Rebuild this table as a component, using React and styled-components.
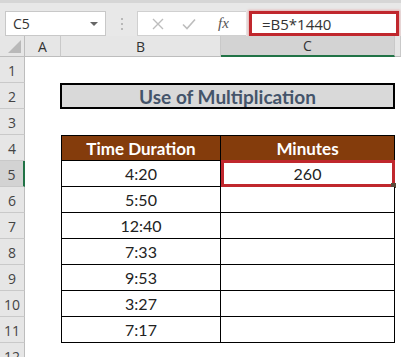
import React from "react";
import styled, { createGlobalStyle } from "styled-components";

const Global = createGlobalStyle`
  html, body { margin: 0; padding: 0; background: #ffffff; }
  body { width: 401px; height: 357px; overflow: hidden; }
`;

const Page = styled.div`
  width: 401px;
  height: 357px;
  display: flex;
  flex-direction: column;
  background: #fff;
  overflow: hidden;
`;

const Toolbar = styled.div`
  height: 43px;
  border-top: 3px solid #d6d6d6;
  background: #e8e8e8;
  display: flex;
  align-items: flex-start;
  padding: 8px 0 0 5px;
  box-sizing: border-box;
  height: 46px;
`;

const NameBox = styled.div`
  width: 101px;
  height: 25px;
  box-sizing: border-box;
  background: #fff;
  border: 1px solid #c8c8c8;
  display: flex;
  align-items: center;
  justify-content: space-between;
  padding: 0 7px 0 7px;
  font: 14px "Open Sans", sans-serif;
  color: #333;
`;

const Caret = styled.span`
  width: 0;
  height: 0;
  border-left: 4px solid transparent;
  border-right: 4px solid transparent;
  border-top: 4px solid #666;
`;

const Dots = styled.div`
  width: 31px;
  display: flex;
  flex-direction: column;
  align-items: center;
  gap: 3px;
  padding-top: 7px;
  & > span { width: 2px; height: 2px; background: #b8b8b8; }
`;

const FnBox = styled.div`
  width: 109px;
  height: 25px;
  box-sizing: border-box;
  background: #fff;
  border: 1px solid #d0d0d0;
  border-right: none;
  display: flex;
  align-items: center;
  padding-left: 14px;
  gap: 18px;
`;

const Fx = styled.span`
  font: italic 15px "Liberation Serif", serif;
  color: #555;
  margin-left: 4px;
`;

const FormulaBox = styled.div`
  margin-left: 3px;
  width: 150px;
  height: 25px;
  box-sizing: border-box;
  background: #fff;
  border: 3px solid #c0272d;
  box-shadow: 0 0 2px 1px rgba(230, 120, 120, 0.5);
  display: flex;
  align-items: center;
  padding-left: 10px;
  font: 15px "Open Sans", sans-serif;
  color: #333;
`;

const Sheet = styled.div`
  display: grid;
  grid-template-columns: 25px 36px 160px 174px 1fr;
  grid-template-rows: 21px repeat(12, 26px);
`;

const HeadCell = styled.div`
  background: ${(p) => (p.$active ? "#d3d3d3" : "#e6e6e6")};
  border-right: 1px solid #c9c9c9;
  border-bottom: ${(p) => (p.$active ? "2px solid #217346" : "1px solid #bdbdbd")};
  box-sizing: border-box;
  display: flex;
  align-items: center;
  justify-content: center;
  font: 14px "Open Sans", sans-serif;
  color: #333;
`;

const Corner = styled.div`
  background: #e6e6e6;
  border-right: 1px solid #bdbdbd;
  border-bottom: 1px solid #bdbdbd;
  box-sizing: border-box;
  position: relative;
  &::after {
    content: "";
    position: absolute;
    right: 3px;
    bottom: 3px;
    border-left: 13px solid transparent;
    border-bottom: 13px solid #b9b9b9;
  }
`;

const RowHead = styled.div`
  background: ${(p) => (p.$active ? "#d3d3d3" : "#e6e6e6")};
  border-bottom: 1px solid #c9c9c9;
  border-right: ${(p) => (p.$active ? "2px solid #217346" : "1px solid #bdbdbd")};
  box-sizing: border-box;
  display: flex;
  align-items: center;
  justify-content: center;
  padding-top: 2px;
  font: 14px "Open Sans", sans-serif;
  color: #444;
`;

const Empty = styled.div``;

const Title = styled.div`
  grid-column: 3 / span 2;
  margin-left: -1px;
  background: #d9d9d9;
  border: 2px solid #000;
  box-sizing: border-box;
  display: flex;
  align-items: center;
  justify-content: center;
  font: bold 19px "Lato", sans-serif;
  color: #44546a;
`;

const Cell = styled.div`
  position: relative;
  background: ${(p) => (p.$head ? "#843c0c" : "#fff")};
  color: ${(p) => (p.$head ? "#fff" : "#222")};
  font: ${(p) => (p.$head ? "bold 17px" : "16px")} "Lato", sans-serif;
  border-left: ${(p) => (p.$first ? "1px solid #000" : "none")};
  border-right: 1px solid #000;
  border-top: ${(p) => (p.$top ? "1px solid #000" : "none")};
  border-bottom: 1px solid #000;
  box-sizing: border-box;
  display: flex;
  align-items: center;
  justify-content: center;
`;

const Selection = styled.div`
  position: absolute;
  left: 0;
  top: -1px;
  right: -1px;
  bottom: -1px;
  border: 3px solid #c0272d;
  pointer-events: none;
  &::after {
    content: "";
    position: absolute;
    right: -4px;
    bottom: -4px;
    width: 5px;
    height: 5px;
    background: #5a4a3a;
  }
`;

const XIcon = () => (
  <svg width="12" height="12" viewBox="0 0 12 12">
    <path d="M1 1 L11 11 M11 1 L1 11" stroke="#bdbdbd" strokeWidth="1.4" fill="none" />
  </svg>
);

const CheckIcon = () => (
  <svg width="14" height="12" viewBox="0 0 14 12">
    <path d="M1 6.5 L5 10.5 L13 1.5" stroke="#bdbdbd" strokeWidth="1.6" fill="none" />
  </svg>
);

const times = ["4:20", "5:50", "12:40", "7:33", "9:53", "3:27", "7:17"];

export default function App() {
  const rows = [];
  for (let r = 1; r <= 12; r++) {
    const active = r === 5;
    rows.push(<RowHead key={`h${r}`} $active={active}>{r}</RowHead>);
    rows.push(<Empty key={`a${r}`} />);
    if (r === 2) {
      rows.push(<Title key="title">Use of Multiplication</Title>);
    } else if (r === 4) {
      rows.push(
        <Cell key="b4" $head $first $top>Time Duration</Cell>,
        <Cell key="c4" $head $top>Minutes</Cell>
      );
    } else if (r >= 5 && r <= 11) {
      const i = r - 5;
      rows.push(
        <Cell key={`b${r}`} $first>{times[i]}</Cell>,
        <Cell key={`c${r}`}>
          {r === 5 ? "260" : ""}
          {r === 5 && <Selection />}
        </Cell>
      );
    } else {
      rows.push(<Empty key={`b${r}`} />, <Empty key={`c${r}`} />);
    }
    rows.push(<Empty key={`d${r}`} />);
  }

  return (
    <Page>
      <Global />
      <Toolbar>
        <NameBox>
          C5
          <Caret />
        </NameBox>
        <Dots>
          <span />
          <span />
          <span />
        </Dots>
        <FnBox>
          <XIcon />
          <CheckIcon />
          <Fx>fx</Fx>
        </FnBox>
        <FormulaBox>=B5*1440</FormulaBox>
      </Toolbar>
      <Sheet>
        <Corner />
        <HeadCell>A</HeadCell>
        <HeadCell>B</HeadCell>
        <HeadCell $active>C</HeadCell>
        <HeadCell />
        {rows}
      </Sheet>
    </Page>
  );
}
